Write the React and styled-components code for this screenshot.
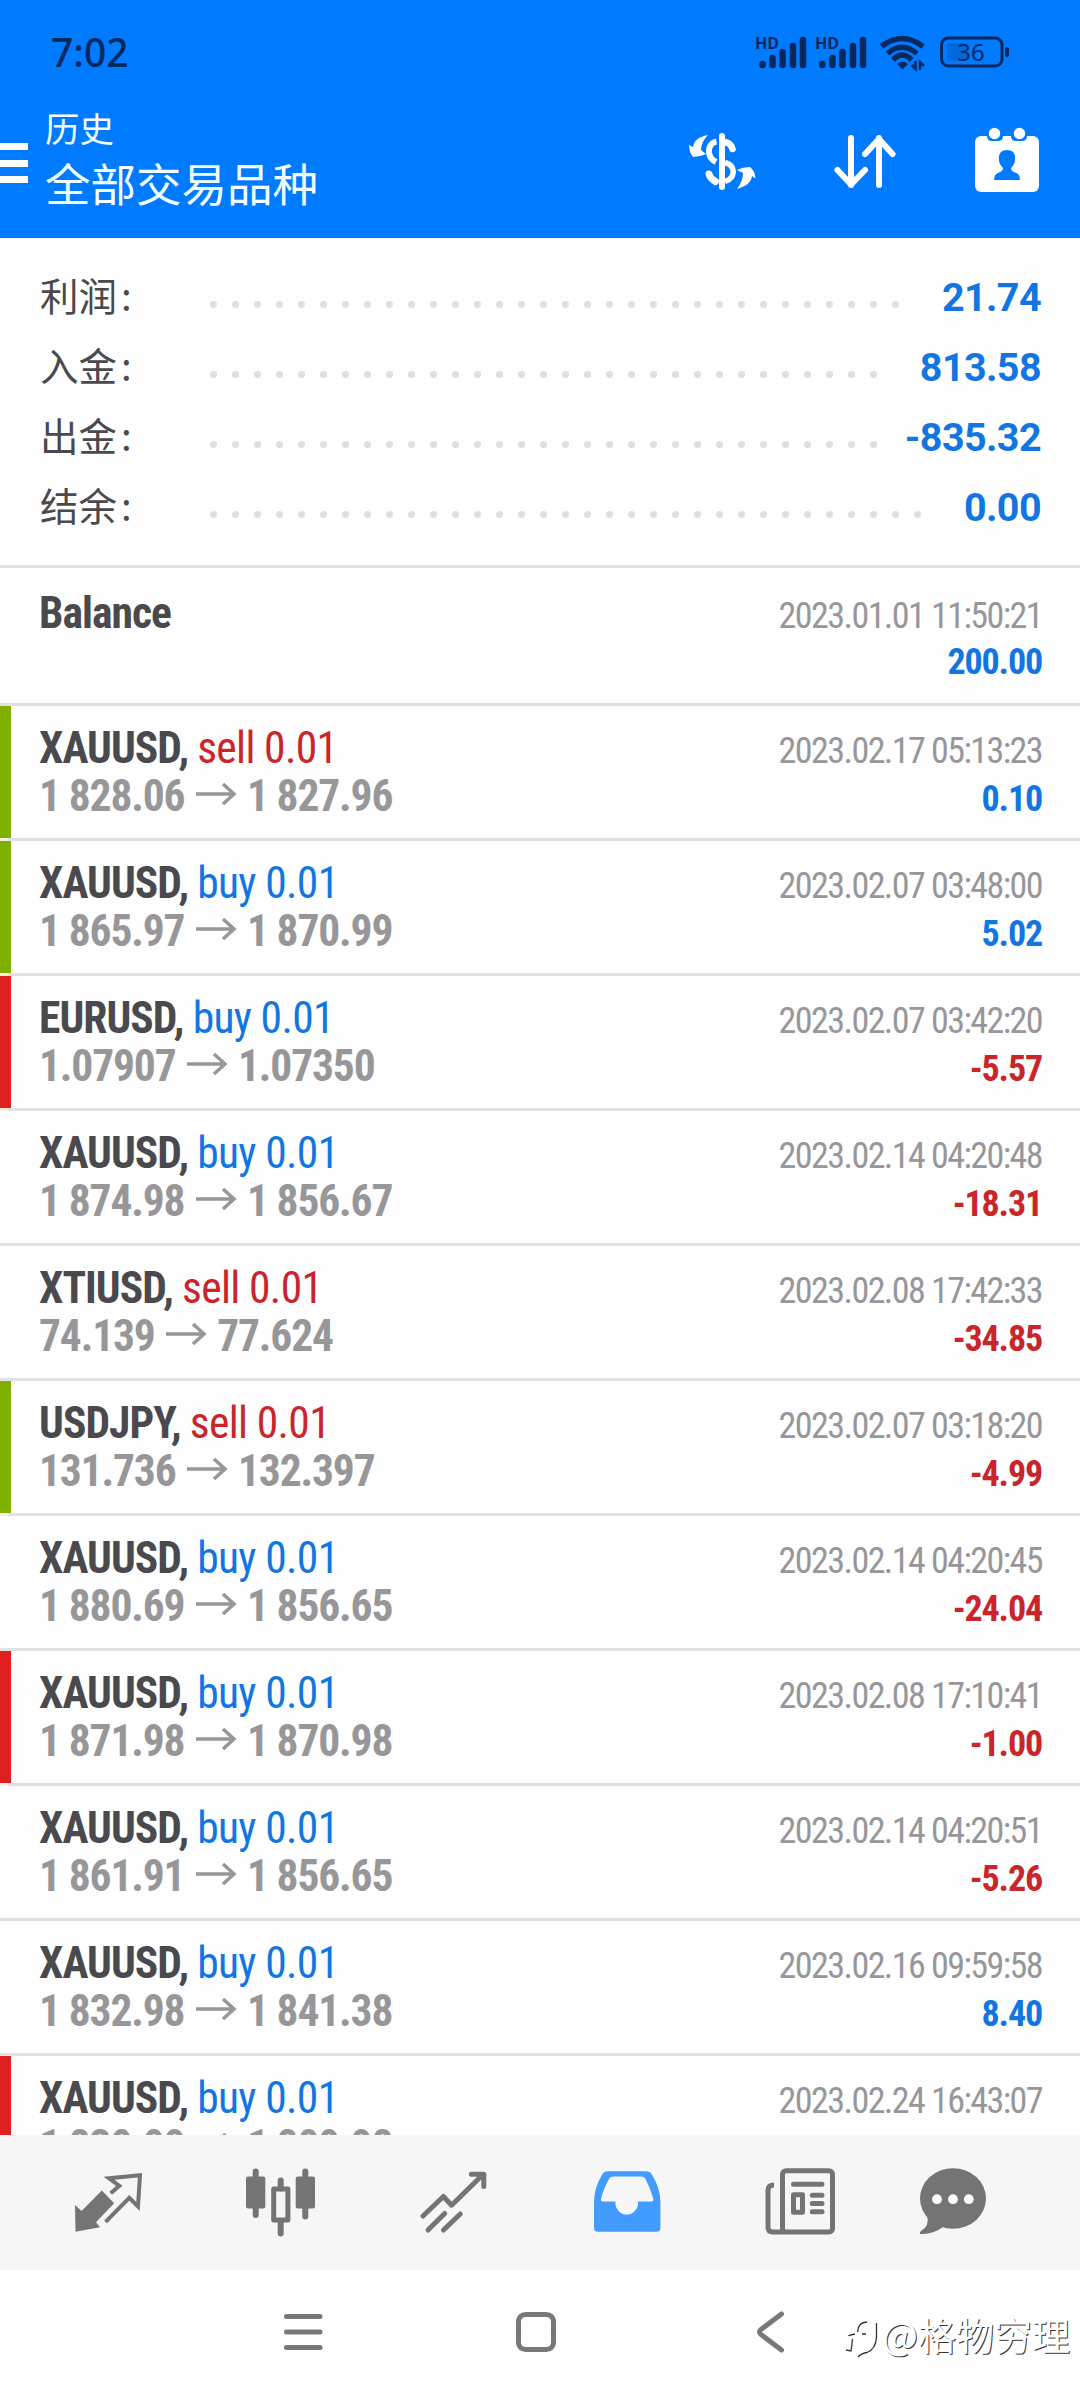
import React from "react"
import styled, { createGlobalStyle } from "styled-components"

const GlobalStyle = createGlobalStyle`
    body {
        margin: 0;
        background: #fff;
        font-family: Roboto, "Noto Sans CJK SC", sans-serif;
    }
`

const Screen = styled.div`
    position: relative;
    width: 1080px;
    height: 2400px;
    overflow: hidden;
    display: flex;
    flex-direction: column;
    background: #fefefe;
`

const Header = styled.header`
    height: 237.5px;
    flex-shrink: 0;
    background: #007aff;
    color: #f4ffff;
`

const StatusBar = styled.div`
    height: 105px;
    display: flex;
    justify-content: space-between;
    padding: 0 70px 0 51px;
    color: #06285c;
`

const Clock = styled.div`
    font: 500 39px/104px "Noto Sans", sans-serif;
`

const StatusIcons = styled.svg`
    width: 260px;
    height: 50px;
    margin-top: 28px;
    font-family: "Noto Sans", sans-serif;
`

const Toolbar = styled.div`
    display: flex;
    align-items: center;
    height: 132px;
    box-sizing: border-box;
    padding-bottom: 16px;
`

const Burger = styled.div`
    width: 28px;
    display: grid;
    gap: 9.5px;
    margin: 0 17px 0 0;
`

const BurgerLine = styled.span`
    height: 7px;
    background: #fff;
`

const Titles = styled.div`
    flex: 1;
    margin-bottom: 10px;
    font-family: "Noto Sans CJK SC", sans-serif;
`

const Title = styled.div`
    font-size: 34.5px;
    line-height: 48px;
`

const Subtitle = styled.div`
    font-size: 45.5px;
    line-height: 62px;
`

const Actions = styled.div`
    display: flex;
    gap: 62.5px;
    padding: 0 33px 7px 0;
`

const ActionIcon = styled.svg`
    width: 80px;
    height: 80px;
`

const Summary = styled.section`
    height: 327.5px;
    flex-shrink: 0;
    box-sizing: border-box;
    padding: 25px 39px 0 40px;
`

const SummaryRow = styled.div`
    height: 70px;
    display: flex;
    align-items: center;
`

const SummaryLabel = styled.div`
    width: 162.5px;
    flex-shrink: 0;
    margin-bottom: 8px;
    font: 400 38.5px/70px "Noto Sans CJK SC", sans-serif;
    color: #4a494d;
`

const Colon = styled.span`
    margin-left: 4px;
`

// dots that do not fit wrap to a hidden second line
const Leader = styled.div`
    flex: 1;
    height: 7px;
    margin: 14px 16px 0 0;
    display: flex;
    flex-wrap: wrap;
    overflow: hidden;
`

const LeaderDot = styled.span`
    width: 7px;
    height: 7px;
    margin: 0 7.5px;
    border-radius: 50%;
    background: #dfdfdf;
`

const SummaryValue = styled.div`
    font: 700 39.5px/70px Roboto, sans-serif;
    letter-spacing: -0.6px;
    color: #1276e2;
`

const DealList = styled.section`
    flex: 1;
    min-height: 0;
    overflow: hidden;
    border-top: 3px solid #e2e2e2;
`

const markerColors = { green: "#7fb000", red: "#e02020" }

const Deal = styled.article`
    height: ${props => (props.$tall ? 138 : 135)}px;
    box-sizing: border-box;
    display: flex;
    border-bottom: 3px solid #e2e2e2;
    border-image: ${props =>
        props.$marker ? "linear-gradient(90deg, #f3efdc 11px, #e2e2e2 11px) 3" : "none"};
    padding-top: ${props => (props.$tall ? 3 : 0)}px;
`

const Marker = styled.div`
    width: 11px;
    margin-right: 28px;
    background: ${props => markerColors[props.$color] || "transparent"};
`

const DealBody = styled.div`
    flex: 1;
    padding: 19px 38px 0 0;
    font-family: "Roboto Condensed", Roboto, sans-serif;
    font-stretch: 75%;
`

const DealLine = styled.div`
    height: 48px;
    display: flex;
    justify-content: space-between;
    align-items: baseline;
    line-height: 48px;
    white-space: pre;
`

const Symbol = styled.div`
    font-size: 43.5px;
    font-weight: 700;
    letter-spacing: -0.95px;
    color: #4a494d;
`

const Side = styled.span`
    font-weight: 400;
    letter-spacing: -0.65px;
    color: ${props => (props.$side === "sell" ? "#c9252b" : "#1276e2")};
`

const Prices = styled.div`
    font-size: 43.5px;
    font-weight: 700;
    letter-spacing: -1.15px;
    color: #97979a;
`

const Arrow = styled.svg`
    width: 41px;
    height: 22px;
    margin: 0 10px 6px 11.5px;
`

const Time = styled.div`
    font-size: 36px;
    letter-spacing: -1.55px;
    color: #97979a;
`

const Profit = styled.div`
    font-size: 36px;
    font-weight: 700;
    letter-spacing: -1.15px;
    color: ${props => (props.$negative ? "#c9252b" : "#1276e2")};
`

const TabBar = styled.nav`
    height: 135px;
    flex-shrink: 0;
    display: flex;
    padding-left: 21.5px;
    background: #f6f6f7;
`

const Tab = styled.div`
    width: ${props => props.$width || 173}px;
    display: flex;
    align-items: center;
    justify-content: center;
    color: ${props => (props.$active ? "#429bff" : "#747474")};
`

const TabIcon = styled.svg`
    width: 80px;
    height: 80px;
    fill: none;
    stroke: currentColor;
    stroke-width: 5;
    stroke-linecap: round;
    stroke-linejoin: round;
`

const SystemNav = styled.nav`
    height: 130px;
    flex-shrink: 0;
    box-sizing: border-box;
    display: flex;
    padding: 0 0 6px 186px;
`

const SystemButton = styled.div`
    width: 233.5px;
    display: flex;
    align-items: center;
    justify-content: center;
`

const SystemIcon = styled.svg`
    width: 48px;
    height: 48px;
    fill: none;
    stroke: #787878;
    stroke-width: 5;
    stroke-linecap: round;
    stroke-linejoin: round;
`

const Watermark = styled.div`
    position: absolute;
    right: 10px;
    bottom: 39px;
    display: flex;
    align-items: center;
    font: 400 38px/54px "Noto Sans CJK SC", sans-serif;
    color: #fff;
    text-shadow: 1px 1px 0.5px #333;
`

const WatermarkLogo = styled.svg`
    width: 36px;
    height: 48px;
    overflow: visible;
`

const summary = [
    ["利润", "21.74"],
    ["入金", "813.58"],
    ["出金", "-835.32"],
    ["结余", "0.00"],
]

const deals = [
    { symbol: "XAUUSD", side: "sell", open: "1 828.06", close: "1 827.96", time: "2023.02.17 05:13:23", profit: "0.10", marker: "green" },
    { symbol: "XAUUSD", side: "buy", open: "1 865.97", close: "1 870.99", time: "2023.02.07 03:48:00", profit: "5.02", marker: "green" },
    { symbol: "EURUSD", side: "buy", open: "1.07907", close: "1.07350", time: "2023.02.07 03:42:20", profit: "-5.57", marker: "red" },
    { symbol: "XAUUSD", side: "buy", open: "1 874.98", close: "1 856.67", time: "2023.02.14 04:20:48", profit: "-18.31" },
    { symbol: "XTIUSD", side: "sell", open: "74.139", close: "77.624", time: "2023.02.08 17:42:33", profit: "-34.85" },
    { symbol: "USDJPY", side: "sell", open: "131.736", close: "132.397", time: "2023.02.07 03:18:20", profit: "-4.99", marker: "green" },
    { symbol: "XAUUSD", side: "buy", open: "1 880.69", close: "1 856.65", time: "2023.02.14 04:20:45", profit: "-24.04" },
    { symbol: "XAUUSD", side: "buy", open: "1 871.98", close: "1 870.98", time: "2023.02.08 17:10:41", profit: "-1.00", marker: "red" },
    { symbol: "XAUUSD", side: "buy", open: "1 861.91", close: "1 856.65", time: "2023.02.14 04:20:51", profit: "-5.26" },
    { symbol: "XAUUSD", side: "buy", open: "1 832.98", close: "1 841.38", time: "2023.02.16 09:59:58", profit: "8.40" },
    { symbol: "XAUUSD", side: "buy", open: "1 830.00", close: "1 809.98", time: "2023.02.24 16:43:07", profit: "", marker: "red" },
]

const Signal = ({ x }) => (
    <g transform={`translate(${x} 0)`}>
        <text x="0" y="20.500" fontSize="16" fontWeight="700" fill="currentColor">HD</text>
        <g stroke="currentColor" strokeWidth="6.500" strokeLinecap="round">
            <path d="M7.500 36v1M17.500 30v7M27.500 24v13M38 18v19M48 12v25" />
        </g>
    </g>
)

// origin of the drawing is 750, 28 on the screen
const Status = () => (
    <StatusIcons viewBox="0 0 260 50">
        <Signal x={5} />
        <Signal x={65} />
        <g fill="none" stroke="currentColor" strokeWidth="5.500">
            <path d="M131.500 18.500Q152 2.500 173 18.500" />
            <path d="M137.500 25.500Q152 13 167 25.500" />
            <path d="M143 32Q152 22 161.500 32" />
        </g>
        <path d="M147 36Q152.500 31 158 36L152.500 41.500Z" fill="currentColor" />
        <path d="M165.500 33v8l-4-4M170 42v-8l4 4" fill="none" stroke="currentColor" strokeWidth="2.500" />
        <rect x="191.500" y="10" width="60.500" height="28" rx="7" fill="none" stroke="currentColor" strokeWidth="3" />
        <rect x="197" y="15" width="20" height="18" rx="3" fill="currentColor" opacity=".22" />
        <rect x="255" y="19" width="4" height="10" rx="2" fill="currentColor" />
        <text x="221" y="33" fontSize="24" textAnchor="middle" fill="currentColor">36</text>
    </StatusIcons>
)

const DollarIcon = () => (
    <ActionIcon viewBox="0 0 80 80" fill="none" stroke="#fff">
        <path d="M40 16v51" strokeWidth="6" strokeLinecap="round" />
        <path d="M34.500 21.500C25 23 24 37 34 42" strokeWidth="6" />
        <path d="M43 22c4.500 1 6.500 3 7.500 7" strokeWidth="6.500" strokeLinecap="round" />
        <path d="M43 42.500c11 3 11 15 0 19" strokeWidth="5.500" />
        <path d="M27 54c1 4 3.500 6 6.500 7.500" strokeWidth="7" strokeLinecap="round" />
        <path d="M26 15C16 17 12 21 11 27L7 25Q7 32 11 37Q18 37 24 34L19 30Q19 22 26 15Z" fill="#fff" stroke="none" />
        <path d="M55 69C65 66 69 62 70 56L73.500 58.500Q73 51 68 47Q61 47 55 50L61 53Q61 61 55 69Z" fill="#fff" stroke="none" />
    </ActionIcon>
)

const SortIcon = () => (
    <ActionIcon viewBox="0 0 80 80" fill="none" stroke="#fff" strokeWidth="6" strokeLinecap="round" strokeLinejoin="round">
        <path d="M26 18v47M12.500 50L26 64.500L40 50" />
        <path d="M54 65V18M40 34L54 19L67.500 34" />
    </ActionIcon>
)

const CalendarIcon = () => (
    <ActionIcon viewBox="0 0 80 80">
        <rect x="8" y="16" width="64" height="56" rx="6" fill="#fff" />
        <path d="M20 15v1q0 5 5 5h6q5 0 5-5v-1zM44 15v1q0 5 5 5h6q5 0 5-5v-1z" fill="#007aff" />
        <circle cx="27.500" cy="13.500" r="5.700" fill="#fff" />
        <circle cx="52.500" cy="13.500" r="5.700" fill="#fff" />
        <path d="M27 60Q27 54 32 52.500Q36 51 36 48Q32 44 32 40Q31 30 40 30Q49 30 48 40Q48 44 44 48Q44 51 48 52.500Q53 54 53 60Z" fill="#007aff" />
    </ActionIcon>
)

export default () => (
    <Screen>
        <GlobalStyle />
        <Header>
            <StatusBar>
                <Clock>7:02</Clock>
                <Status />
            </StatusBar>
            <Toolbar>
                <Burger>
                    <BurgerLine />
                    <BurgerLine />
                    <BurgerLine />
                </Burger>
                <Titles>
                    <Title>历史</Title>
                    <Subtitle>全部交易品种</Subtitle>
                </Titles>
                <Actions>
                    <DollarIcon />
                    <SortIcon />
                    <CalendarIcon />
                </Actions>
            </Toolbar>
        </Header>
        <Summary>
            {summary.map(([label, value]) => (
                <SummaryRow key={label}>
                    <SummaryLabel>{label}<Colon>:</Colon></SummaryLabel>
                    <Leader>
                        {Array.from({ length: 40 }, (_, i) => (
                            <LeaderDot key={i} />
                        ))}
                    </Leader>
                    <SummaryValue>{value}</SummaryValue>
                </SummaryRow>
            ))}
        </Summary>
        <DealList>
            <Deal $tall>
                <Marker />
                <DealBody>
                    <DealLine>
                        <Symbol>Balance</Symbol>
                        <Time>2023.01.01 11:50:21</Time>
                    </DealLine>
                    <DealLine>
                        <span />
                        <Profit>200.00</Profit>
                    </DealLine>
                </DealBody>
            </Deal>
            {deals.map(deal => (
                <Deal key={deal.time} $marker={deal.marker}>
                    <Marker $color={deal.marker} />
                    <DealBody>
                        <DealLine>
                            <Symbol>
                                {deal.symbol}, <Side $side={deal.side}>{deal.side} 0.01</Side>
                            </Symbol>
                            <Time>{deal.time}</Time>
                        </DealLine>
                        <DealLine>
                            <Prices>
                                {deal.open}
                                <Arrow viewBox="0 0 41 22" fill="none" stroke="currentColor" strokeWidth="3.500">
                                    <path d="M0 11h38M27 1l11 10l-11 10" />
                                </Arrow>
                                {deal.close}
                            </Prices>
                            <Profit $negative={deal.profit.startsWith("-")}>{deal.profit}</Profit>
                        </DealLine>
                    </DealBody>
                </Deal>
            ))}
        </DealList>
        <TabBar>
            <Tab>
                <TabIcon viewBox="0 0 80 80">
                    <path d="M7 42L13.500 48L33.800 27.500L46.200 40.200L28 59.200L32 64.200L7.500 68.800Z" fill="currentColor" stroke="none" />
                    <path d="M42.700 30.200L51.300 22.800L41 15.200L72 12.200L70 43.500L61.300 34.800L37.600 58.800" strokeWidth="4" strokeLinecap="butt" strokeLinejoin="miter" />
                </TabIcon>
            </Tab>
            <Tab>
                <TabIcon viewBox="0 0 80 80">
                    <path d="M14.700 8.500v43.500M64.300 8.500v45M39.700 17.500v8M39.700 60v10.500" strokeWidth="6" />
                    <rect x="5" y="13.500" width="19.300" height="32" rx="2" fill="currentColor" stroke="none" />
                    <rect x="54.700" y="13.500" width="19.300" height="32" rx="2" fill="currentColor" stroke="none" />
                    <rect x="32.700" y="26" width="14.200" height="31" />
                </TabIcon>
            </Tab>
            <Tab>
                <TabIcon viewBox="0 0 80 80">
                    <path d="M9 53L29.400 33.500L37.600 42.200L69 11.500M57.300 11.200H69.800V23.500" />
                    <path d="M14 67L30.700 50.500M29.500 67L46.200 51" />
                </TabIcon>
            </Tab>
            <Tab $active>
                <TabIcon viewBox="0 0 80 80">
                    <path
                        d="M21 8.200H59Q63 8.200 64.500 11Q73.400 25 73.400 39V65Q73.400 68.800 69.500 68.800H11Q7 68.800 7 65V39Q7 25 15.500 11Q17 8.200 21 8.200ZM26 13.500Q23 13.500 22 16Q16 27 14 36Q13.500 38.500 16 38.500H28.500V41.500A11.300 11.300 0 0 0 51 41.500V38.500H64Q67 38.500 66.300 36Q64 27 58.500 16Q57.500 13.500 54.500 13.500Z"
                        fill="currentColor"
                        fillRule="evenodd"
                        stroke="none"
                    />
                </TabIcon>
            </Tab>
            <Tab>
                <TabIcon viewBox="0 0 80 80">
                    <rect x="22.500" y="7.700" width="50" height="61.300" rx="3.500" />
                    <path d="M14 22q-6 0-6 5.500V64q0 5 5 5h12" strokeLinecap="butt" />
                    <path d="M33.500 21.200H62M52.300 32.200H62M52.300 40.500H62M52.300 48.700H62" />
                    <rect x="33.500" y="31.700" width="9" height="17.500" />
                </TabIcon>
            </Tab>
            <Tab $width={132.5}>
                <TabIcon viewBox="0 0 80 80">
                    <g fill="currentColor" stroke="none">
                        <ellipse cx="40" cy="35.500" rx="33" ry="30.300" />
                        <path d="M14 52Q17 63 8 68Q5.500 70.500 8 71Q20 71.500 30 64Z" />
                    </g>
                    <g fill="#fff" stroke="none">
                        <circle cx="24" cy="36.200" r="4.900" />
                        <circle cx="40" cy="36.200" r="4.900" />
                        <circle cx="55.800" cy="36.200" r="4.900" />
                    </g>
                </TabIcon>
            </Tab>
        </TabBar>
        <SystemNav>
            <SystemButton>
                <SystemIcon viewBox="0 0 48 48">
                    <path d="M7.500 8.500h33.500M7.500 24h33.500M7.500 39.500h33.500" />
                </SystemIcon>
            </SystemButton>
            <SystemButton>
                <SystemIcon viewBox="0 0 48 48">
                    <rect x="6.500" y="6.500" width="35" height="35" rx="7" />
                </SystemIcon>
            </SystemButton>
            <SystemButton>
                <SystemIcon viewBox="0 0 48 48">
                    <path d="M35.500 6L15 21.500Q12 24 15 26.500L35.500 42" />
                </SystemIcon>
            </SystemButton>
        </SystemNav>
        <Watermark>
            <WatermarkLogo viewBox="0 0 36 48" fill="none" stroke="#333" strokeWidth="1.300">
                <path d="M12 47Q16 43 21 42.500Q30 39 30.500 27V13M11.500 22Q12 12.500 21 12M2.300 25.700L9 24M6.500 29Q6 35 5 41L0 40M16 24h4" />
            </WatermarkLogo>
            @格物穷理
        </Watermark>
    </Screen>
)
